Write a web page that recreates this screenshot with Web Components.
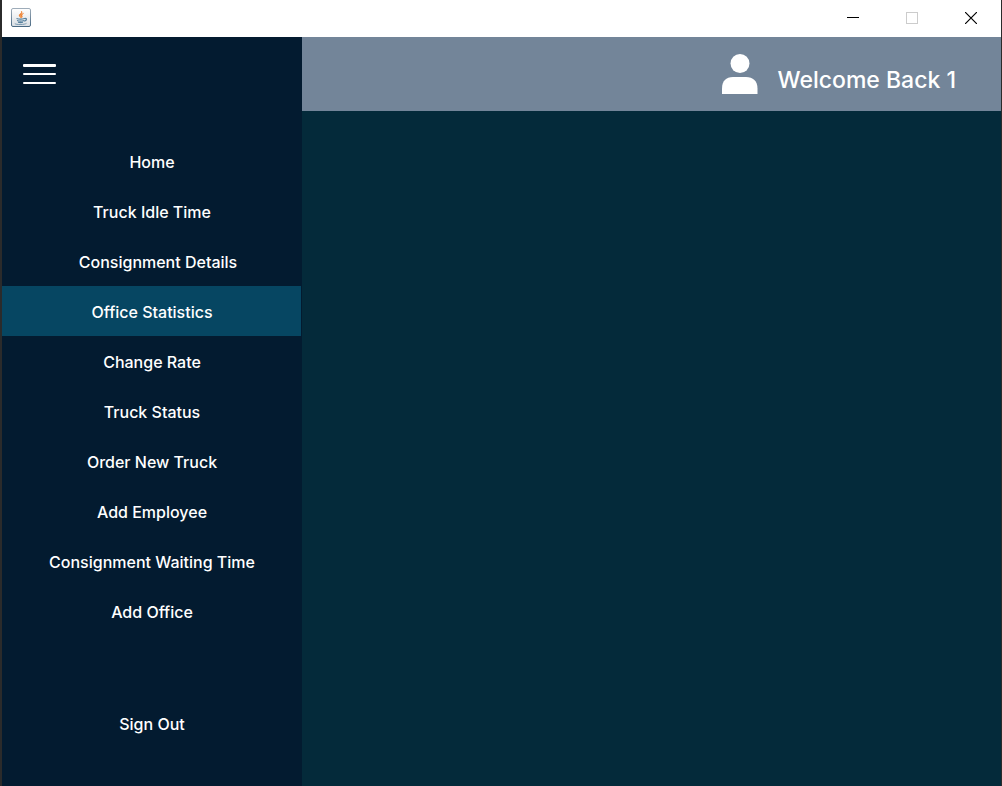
<!DOCTYPE html>
<html lang="en">
<head>
<meta charset="utf-8">
<title>Office Statistics</title>
<style>
  html, body { margin: 0; height: 100%; }
  body { background: #2b2b2b; color: #fff; font-family: Inter, "Open Sans", sans-serif; }
</style>
</head>
<body>
<app-window>
  <title-bar slot="title"></title-bar>
  <side-menu slot="menu">
    <menu-item>Home</menu-item>
    <menu-item>Truck Idle Time</menu-item>
    <menu-item indented>Consignment Details</menu-item>
    <menu-item active>Office Statistics</menu-item>
    <menu-item>Change Rate</menu-item>
    <menu-item>Truck Status</menu-item>
    <menu-item>Order New Truck</menu-item>
    <menu-item>Add Employee</menu-item>
    <menu-item>Consignment Waiting Time</menu-item>
    <menu-item>Add Office</menu-item>
    <menu-item slot="footer">Sign Out</menu-item>
  </side-menu>
  <welcome-bar slot="header">Welcome Back 1</welcome-bar>
</app-window>

<script>
const define = (name, html) => customElements.define(name, class extends HTMLElement {
  constructor() {
    super();
    const template = document.createElement('template');
    template.innerHTML = html;
    this.attachShadow({ mode: 'open' }).append(template.content.cloneNode(true));
  }
});

define('app-window', `
  <style>
    :host { display: flex; flex-direction: column; box-sizing: border-box; min-height: 100%;
            padding: 0 1px 0 2px; }
    :host { min-height: 100vh; }
    .body { flex: 1; display: grid; grid-template-columns: 300px 1fr; }
    .main { display: flex; flex-direction: column; background: #042a3a; }
  </style>
  <slot name="title"></slot>
  <div class="body">
    <slot name="menu"></slot>
    <main class="main"><slot name="header"></slot><slot></slot></main>
  </div>`);

define('title-bar', `
  <style>
    :host { display: flex; align-items: center; justify-content: space-between; height: 37px;
            box-sizing: border-box; padding: 0 1px 2px 9px; background: #fff; color: #000; }
    svg { display: block; }
    .controls { display: flex; }
    button { display: grid; place-items: center; width: 59px; height: 35px; padding: 0;
             border: 0; background: none; color: inherit; }
    button:disabled { color: #ccc; }
  </style>
  <svg width="20" height="20" viewBox="0 0 20 20" aria-hidden="true">
    <defs>
      <linearGradient id="tile" x1="0" y1="0" x2="0" y2="1"><stop offset="0" stop-color="#fff"/><stop offset="1" stop-color="#d9dee3"/></linearGradient>
      <linearGradient id="edge" x1="0" y1="0" x2="0" y2="1"><stop offset="0" stop-color="#9eacb9"/><stop offset="1" stop-color="#496983"/></linearGradient>
    </defs>
    <rect x=".5" y=".5" width="19" height="18" rx="1.5" fill="url(#tile)" stroke="url(#edge)"/>
    <path d="M10.400 3c1.200 2.200-2.800 3-2.200 4.800.2.800 1 1.300 1.500 2-.1-1.400-.8-2 .3-3.300C10.800 5.300 11.700 4.500 10.400 3zM12.600 5.300c-1.700.6-3 1.500-2.500 2.700.2.700.7 1.100.2 2 1.600-1 1-1.600.7-2.300-.3-.8.800-1.600 1.600-2.400z" fill="#ee7d28" stroke="#ee7d28" stroke-width=".5"/>
    <path d="M5.500 10.500c2 .7 6 .7 8 0M6 12.500c2 .6 5 .6 7 0M7 14.200c1.500.5 3.500.5 5 0M13.500 10.500c2.800-.5 2.500 2-.3 2.700" fill="none" stroke="#56819e" stroke-width="1.200"/>
    <path d="M4 15.300c-1 1.500 9.500 1.700 11.500 0" fill="none" stroke="#7999b0"/>
  </svg>
  <div class="controls">
    <button type="button" aria-label="Minimize">
      <svg width="12" height="12" shape-rendering="crispEdges"><path d="M0 5.500h12" stroke="currentColor"/></svg>
    </button>
    <button type="button" aria-label="Maximize" disabled>
      <svg width="12" height="12" shape-rendering="crispEdges"><path d="M.5.5h11v11H.5z" fill="none" stroke="currentColor"/></svg>
    </button>
    <button type="button" aria-label="Close">
      <svg width="12" height="12"><path d="M0 0l12 12M12 0L0 12" stroke="currentColor" stroke-width="1.200"/></svg>
    </button>
  </div>`);

define('side-menu', `
  <style>
    :host { display: flex; flex-direction: column; background: #031b30; }
    .toggle { align-self: flex-start; margin: 26px 0 0 21px; padding: 0; border: 0; background: none; color: #fff; }
    svg { display: block; }
    nav { display: flex; flex-direction: column; margin: 51px 1px 0 0; }
    .footer { margin: 62px 1px 0 0; }
  </style>
  <button class="toggle" type="button" aria-label="Toggle menu">
    <svg width="33" height="22" fill="currentColor"><rect y="1" width="33" height="3" rx="1"/><rect y="10" width="33" height="2" rx="1"/><rect y="19" width="33" height="2" rx="1"/></svg>
  </button>
  <nav><slot></slot></nav>
  <div class="footer"><slot name="footer"></slot></div>`);

define('menu-item', `
  <style>
    :host { display: block; }
    button { display: block; box-sizing: border-box; width: 100%; height: 50px; padding: 1px 0 0 1px; border: 0;
             background: none; color: #fff; font: 500 16px/24px Inter, "Open Sans", sans-serif; text-align: center; }
    :host([active]) button { background: #064662; }
    :host([indented]) button { padding-left: 13px; }
  </style>
  <button type="button"><slot></slot></button>`);

define('welcome-bar', `
  <style>
    :host { display: flex; align-items: flex-end; justify-content: flex-end; gap: 20px; height: 74px;
            box-sizing: border-box; padding: 0 45px 16px 16px; background: #738599;
            font-size: 23px; line-height: 30px; font-weight: 500; white-space: nowrap; }
    svg { display: block; }
  </style>
  <svg width="36" height="41" fill="#fff" aria-hidden="true"><circle cx="18" cy="9.500" r="9.500"/><path d="M0 40v-5.500C0 27 4 23 11 23h13c7 0 11.500 4 11.500 11.500V40z"/></svg>
  <span><slot></slot></span>`);
</script>
</body>
</html>
